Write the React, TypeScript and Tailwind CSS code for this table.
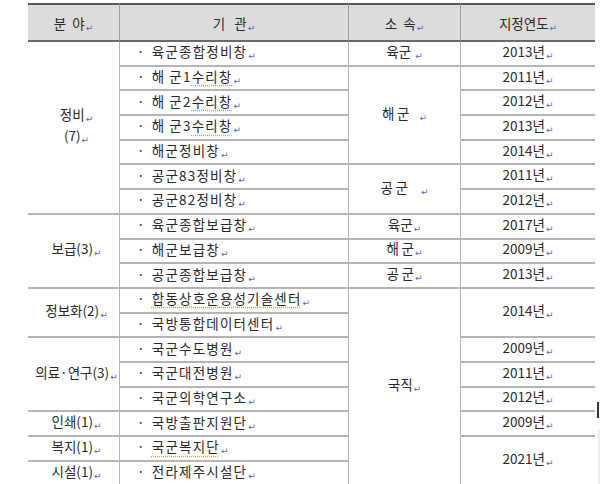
import React from 'react';

type Cell = { text: string[]; span: number };

type Row = {
  field?: Cell;
  org: string;
  mark?: string; // part of org name with the spell-check underline
  aff?: Cell;
  year?: Cell;
};

const rows: Row[] = [
  { field: { text: ['정비', '(7)'], span: 7 }, org: '육군종합정비창', aff: { text: ['육군\u00a0'], span: 1 }, year: { text: ['2013년'], span: 1 } },
  { org: '해\u2009군1수리창', mark: '수리창', aff: { text: ['해\u2009군\u00a0\u00a0\u00a0'], span: 4 }, year: { text: ['2011년'], span: 1 } },
  { org: '해\u2009군2수리창', mark: '수리창', year: { text: ['2012년'], span: 1 } },
  { org: '해\u2009군3수리창', mark: '수리창', year: { text: ['2013년'], span: 1 } },
  { org: '해군정비창', year: { text: ['2014년'], span: 1 } },
  { org: '공군83정비창', aff: { text: ['공\u2009군\u00a0\u00a0\u00a0\u00a0'], span: 2 }, year: { text: ['2011년'], span: 1 } },
  { org: '공군82정비창', year: { text: ['2012년'], span: 1 } },
  { field: { text: ['보급(3)'], span: 3 }, org: '육군종합보급창', aff: { text: ['육군'], span: 1 }, year: { text: ['2017년'], span: 1 } },
  { org: '해군보급창', aff: { text: ['해\u2009군'], span: 1 }, year: { text: ['2009년'], span: 1 } },
  { org: '공군종합보급창', aff: { text: ['공\u2009군'], span: 1 }, year: { text: ['2013년'], span: 1 } },
  { field: { text: ['정보화(2)'], span: 2 }, org: '합동상호운용성기술센터', mark: '합동상호운용성기술센터', aff: { text: ['국직'], span: 8 }, year: { text: ['2014년'], span: 2 } },
  { org: '국방통합데이터센터' },
  { field: { text: ['의료·연구(3)'], span: 3 }, org: '국군수도병원', year: { text: ['2009년'], span: 1 } },
  { org: '국군대전병원', year: { text: ['2011년'], span: 1 } },
  { org: '국군의학연구소', year: { text: ['2012년'], span: 1 } },
  { field: { text: ['인쇄(1)'], span: 1 }, org: '국방출판지원단', year: { text: ['2009년'], span: 1 } },
  { field: { text: ['복지(1)'], span: 1 }, org: '국군복지단', mark: '국군복지단', year: { text: ['2021년'], span: 2 } },
  { field: { text: ['시설(1)'], span: 1 }, org: '전라제주시설단' },
];

const headers = ['분\u00a0\u00a0야', '기\u00a0\u00a0\u00a0관', '소\u00a0\u00a0속', '지정연도'];

function Mark() {
  return (
    <span className="ml-[1px] align-[-2px] text-[9px] text-[#4d6bc0] font-['DejaVu_Sans',sans-serif] tracking-normal">
      ↵
    </span>
  );
}

function Lines({ text }: { text: string[] }) {
  return (
    <>
      {text.map((t, i) => (
        <div key={i} className="leading-[16px]">
          {t}
          <Mark />
        </div>
      ))}
    </>
  );
}

function OrgName({ name, mark }: { name: string; mark?: string }) {
  if (!mark) return <>{name}</>;
  const i = name.indexOf(mark);
  return (
    <>
      {name.slice(0, i)}
      <span className="underline decoration-dotted decoration-[#f0924a] underline-offset-[3px]">{mark}</span>
      {name.slice(i + mark.length)}
    </>
  );
}

const cellLine = 'border-b-2 border-[#b4b4b4]';
const colLine = 'border-r border-[#9c9c9c]';

export default function App() {
  return (
    <div className="relative w-[600px] h-[484px] overflow-hidden bg-white text-[13.5px] text-[#2a2a2a] font-['Noto_Sans_CJK_KR',sans-serif]">
      <table className="ml-[28px] mt-[3px] w-[567px] table-fixed border-separate border-spacing-0">
        <colgroup>
          <col className="w-[92px]" />
          <col className="w-[229px]" />
          <col className="w-[112px]" />
          <col className="w-[134px]" />
        </colgroup>
        <thead>
          <tr className="h-[39px] bg-[#dcdcdc]">
            {headers.map((h, i) => (
              <th
                key={h}
                className={`font-normal text-center pt-[3px] border-t-2 border-b-2 border-t-[#5a5a5a] border-b-[#6a6a6a] ${i < 3 ? 'border-r border-r-[#9c9c9c]' : ''}`}
              >
                {h}
                <Mark />
              </th>
            ))}
          </tr>
        </thead>
        <tbody>
          {rows.map((r, idx) => (
            <tr key={idx} className="h-[24.7px]">
              {r.field && (
                <td rowSpan={r.field.span} className={`text-center pl-[6px] ${cellLine} ${colLine}`}>
                  <Lines text={r.field.text} />
                </td>
              )}
              <td className={`pl-[17px] leading-none tracking-[1.2px] whitespace-nowrap ${cellLine} ${colLine}`}>
                <span className="mr-[6px]">·</span>
                <OrgName name={r.org} mark={r.mark} />
                <Mark />
              </td>
              {r.aff && (
                <td rowSpan={r.aff.span} className={`text-center ${cellLine} ${colLine}`}>
                  <Lines text={r.aff.text} />
                </td>
              )}
              {r.year && (
                <td rowSpan={r.year.span} className={`text-center ${cellLine}`}>
                  <Lines text={r.year.text} />
                </td>
              )}
            </tr>
          ))}
        </tbody>
      </table>
      <div className="absolute left-[597px] top-[402px] w-[2px] h-[16px] bg-[#333]" />
      <div className="absolute left-[598px] top-[430px] w-[2px] h-[54px] bg-[#eeeeee]" />
    </div>
  );
}
